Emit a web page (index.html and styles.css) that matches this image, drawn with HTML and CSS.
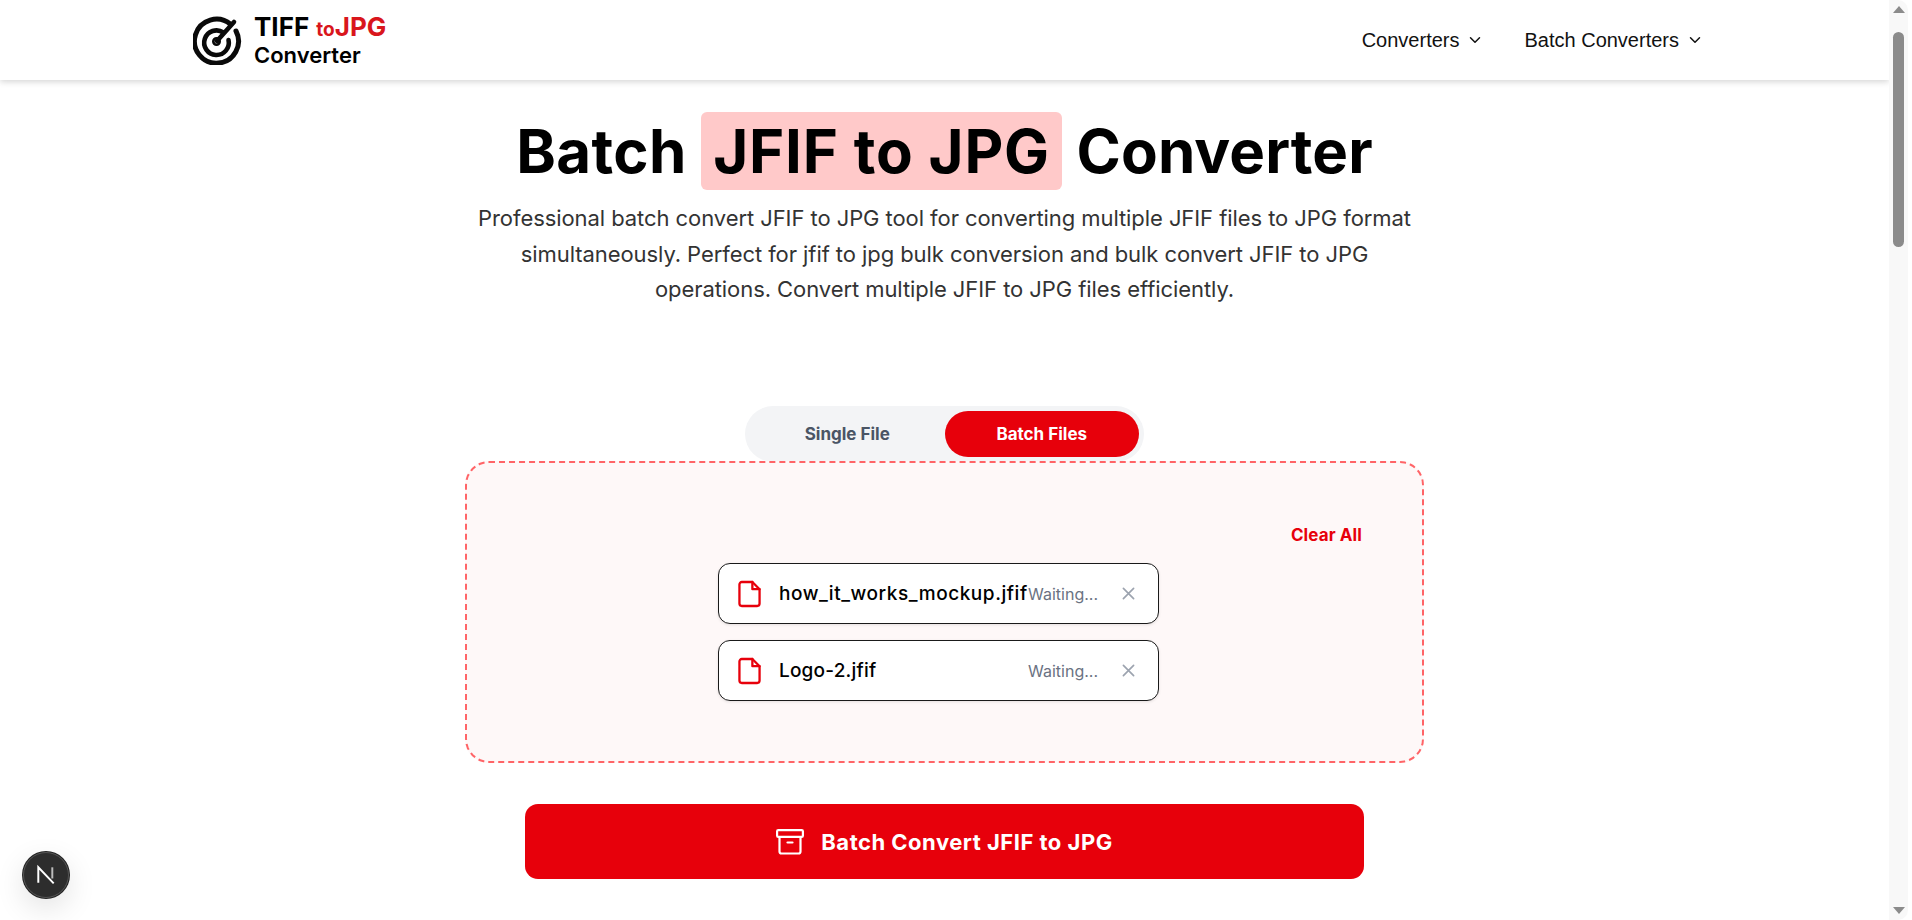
FILE: index.html
```html
<!DOCTYPE html>
<html lang="en">
<head>
<meta charset="utf-8">
<title>Batch JFIF to JPG Converter</title>
<link rel="stylesheet" href="styles.css">
</head>
<body>
<div class="page">
  <header class="header">
    <a class="logo" href="#">
      <svg class="logo-mark" viewBox="0 0 49 49" fill="none" stroke="#0a0a0a" stroke-linecap="round">
        <path d="M37.5 8.2A22 22 0 1 0 43 15" stroke-width="5"/>
        <path d="M30.4 16.5A12.3 12.3 0 1 0 35.5 24" stroke-width="4.6"/>
        <circle cx="23.5" cy="25.5" r="3.2" stroke-width="2.6"/>
        <path d="M24 25 L41 6" stroke-width="4.6"/>
      </svg>
      <span class="logo-text">
        <span class="logo-top">TIFF <span class="logo-to">to</span><span class="logo-jpg">JPG</span></span>
        <span class="logo-bottom">Converter</span>
      </span>
    </a>
    <nav class="nav">
      <a class="nav-item" href="#">Converters
        <svg class="chev" viewBox="0 0 24 24" fill="none" stroke="currentColor" stroke-width="2" stroke-linecap="round" stroke-linejoin="round"><path d="m6 9 6 6 6-6"/></svg>
      </a>
      <a class="nav-item" href="#">Batch Converters
        <svg class="chev" viewBox="0 0 24 24" fill="none" stroke="currentColor" stroke-width="2" stroke-linecap="round" stroke-linejoin="round"><path d="m6 9 6 6 6-6"/></svg>
      </a>
    </nav>
  </header>
  <main class="main">
    <h1 class="title">Batch <span class="hl">JFIF to JPG</span> <span class="title-end">Converter</span></h1>
    <p class="lead">Professional batch convert JFIF to JPG tool for converting multiple JFIF files to JPG format simultaneously. Perfect for jfif to jpg bulk conversion and bulk convert JFIF to JPG operations. Convert multiple JFIF to JPG files efficiently.</p>
    <div class="toggle">
      <button class="tab">Single File</button>
      <button class="tab tab-active">Batch Files</button>
    </div>
    <section class="drop">
      <div class="clear-row"><button class="clear">Clear All</button></div>
      <ul class="files">
        <li class="file">
          <svg class="file-icon" viewBox="0 0 24 28" fill="none" stroke="#e7000b" stroke-width="2.4" stroke-linejoin="round" stroke-linecap="round"><path d="M15 1.5H4A2.5 2.5 0 0 0 1.5 4v20A2.5 2.5 0 0 0 4 26.5h16a2.500 2.500 0 0 0 2.500-2.500V9z"/><path d="M15 1.5V9h7.500"/></svg>
          <span class="file-name file-name-long">how_it_works_mockup.jfif</span>
          <span class="file-status">Waiting...</span>
          <svg class="file-x" viewBox="0 0 14 14" fill="none" stroke="#9ca3af" stroke-width="1.8" stroke-linecap="round"><path d="M1.500 1.500l11 11M12.500 1.500l-11 11"/></svg>
        </li>
        <li class="file">
          <svg class="file-icon" viewBox="0 0 24 28" fill="none" stroke="#e7000b" stroke-width="2.4" stroke-linejoin="round" stroke-linecap="round"><path d="M15 1.5H4A2.5 2.5 0 0 0 1.5 4v20A2.5 2.5 0 0 0 4 26.5h16a2.500 2.500 0 0 0 2.500-2.500V9z"/><path d="M15 1.5V9h7.500"/></svg>
          <span class="file-name">Logo-2.jfif</span>
          <span class="file-status">Waiting...</span>
          <svg class="file-x" viewBox="0 0 14 14" fill="none" stroke="#9ca3af" stroke-width="1.8" stroke-linecap="round"><path d="M1.500 1.500l11 11M12.500 1.500l-11 11"/></svg>
        </li>
      </ul>
    </section>
    <button class="convert">
      <svg class="convert-icon" viewBox="0 0 28 26" fill="none" stroke="#fff" stroke-width="2.2" stroke-linecap="round" stroke-linejoin="round"><rect x="1.100" y="1.100" width="25.800" height="6.800" rx="1.200"/><path d="M3.500 8v14.500a2 2 0 0 0 2 2h17a2 2 0 0 0 2-2V8"/><path d="M11.500 13.500h5"/></svg>
      Batch Convert JFIF to JPG
    </button>
  </main>
</div>
<aside class="scrollbar">
  <span class="arrow arrow-up"></span>
  <span class="thumb"></span>
  <span class="arrow arrow-down"></span>
</aside>
<button class="next-badge" aria-label="Next.js dev tools">
  <svg viewBox="0 0 20 20" fill="none"><path d="M4.500 15.500V4.500L15.500 16" stroke="#fff" stroke-width="1.400"/><path d="M14.500 4.500v8" stroke="#bbb" stroke-width="1.400"/></svg>
</button>
</body>
</html>
```
FILE: styles.css
```css
* { box-sizing: border-box; }
html, body { margin: 0; height: 920px; overflow: hidden; background: #fff; }
body {
  display: flex;
  font-family: Inter, "Liberation Sans", sans-serif;
  color: #000;
  padding-right: 4px;
}
button { font: inherit; border: 0; background: none; padding: 0; }
a { color: inherit; text-decoration: none; }

.page { width: 1889px; flex: none; }

.header {
  height: 80px;
  padding: 0 185px 0 193px;
  display: flex;
  align-items: center;
  justify-content: space-between;
  background: #fff;
  box-shadow: 0 2px 6px rgba(0,0,0,.16);
}
.logo { display: flex; align-items: center; gap: 12px; }
.logo-mark { width: 49px; height: 49px; flex: none; }
.logo-text { display: flex; flex-direction: column; font-weight: 700; }
.logo-top { font-size: 26px; line-height: 27px; white-space: nowrap; }
.logo-to { font-size: 19px; color: #d9161c; margin-left: 1px; }
.logo-jpg { color: #d9161c; }
.logo-bottom { font-size: 22px; line-height: 24px; font-weight: 600; }

.nav { display: flex; gap: 40px; font-family: "Liberation Sans", Arial, sans-serif; font-size: 20px; color: #111; }
.nav-item { display: flex; align-items: center; gap: 7px; }
.chev { width: 18px; height: 18px; }

.main { display: flex; flex-direction: column; align-items: center; }
.title {
  margin: 32px 0 0;
  font-size: 60px;
  line-height: 78px;
  font-weight: 700;
  letter-spacing: .36px;
  white-space: nowrap;
}
.hl { display: inline-block; padding: 0 12px; background: #ffc9c9; border-radius: 6px; letter-spacing: .8px; }
.title-end { letter-spacing: .1px; }
.lead {
  width: 960px;
  margin: 11px 0 0;
  text-align: center;
  font-size: 22px;
  line-height: 35.500px;
  letter-spacing: -.07px;
  color: #333;
}
.toggle {
  margin-top: 98.500px;
  width: 399px;
  height: 56px;
  padding: 5px;
  display: flex;
  background: #f3f4f6;
  border-radius: 28px;
}
.tab { flex: 1; border-radius: 23px; font-weight: 700; font-size: 17px; color: #4a5565; }
.tab-active { background: #e7000b; color: #fff; }

.drop {
  width: 959px;
  height: 302px;
  margin-top: -1px;
  padding: 60px 60px 0;
  background: #fef8f8;
  border: 2px dashed #ff6467;
  border-radius: 24px;
  position: relative;
}
.clear-row { display: flex; justify-content: flex-end; }
.clear { font-weight: 700; font-size: 17px; letter-spacing: .1px; color: #e7000b; line-height: 24px; }
.files { list-style: none; margin: 16px 0 0 191px; padding: 0; width: 441px; display: flex; flex-direction: column; gap: 16px; }
.file {
  height: 61px;
  padding: 0 19px;
  display: flex;
  align-items: center;
  background: #fff;
  border: 1px solid #1a1a1a;
  border-radius: 12px;
  box-shadow: 0 1px 3px rgba(0,0,0,.1);
}
.file-icon { width: 23px; height: 28px; flex: none; margin-right: 18px; }
.file-name { width: 249px; flex: none; font-size: 19px; font-weight: 500; letter-spacing: .2px; white-space: nowrap; }
.file-name-long { letter-spacing: .55px; }
.file-status { width: 94px; flex: none; font-size: 16px; color: #6a7282; }
.file-x { width: 13px; height: 13px; flex: none; }

.convert {
  margin-top: 41px;
  width: 839px;
  height: 75px;
  display: flex;
  align-items: center;
  justify-content: center;
  gap: 17px;
  background: #e7000b;
  color: #fff;
  border-radius: 13px;
  font-size: 22px;
  letter-spacing: .5px;
  font-weight: 700;
}
.convert-icon { width: 28px; height: 26px; }

.scrollbar {
  width: 19px;
  flex: none;
  height: 920px;
  background: #f8f8f8;
  border-radius: 0 10px 10px 0;
  display: flex;
  flex-direction: column;
  align-items: center;
  position: relative;
}
.thumb { width: 11px; height: 215px; margin-top: 19px; background: #8b8b8b; border-radius: 6px; }
.arrow { width: 0; height: 0; border-left: 6px solid transparent; border-right: 6px solid transparent; }
.arrow-up { margin-top: 6px; border-bottom: 7px solid #8b8b8b; }
.arrow-down { margin-top: auto; margin-bottom: 6px; border-top: 7px solid #8b8b8b; }

.next-badge {
  position: fixed;
  left: 23px;
  top: 852px;
  width: 46px;
  height: 46px;
  border-radius: 50%;
  background: #2d2d2d;
  border: 1px solid #555;
  box-shadow: 0 0 0 1px #222, 0 10px 30px rgba(0,0,0,.12);
  display: flex;
  align-items: center;
  justify-content: center;
}
.next-badge svg { width: 28px; height: 28px; }
```
